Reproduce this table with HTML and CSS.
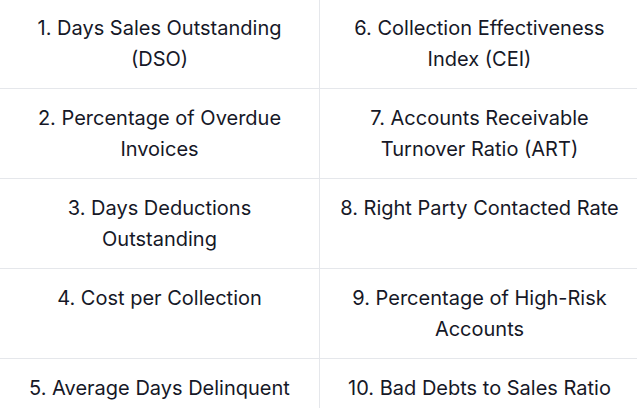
FILE: index.html
```html
<!DOCTYPE html>
<html>
<head>
<meta charset="utf-8">
<link rel="stylesheet" href="styles.css">
</head>
<body>
<table class="kpi-table">
  <tbody>
    <tr><td>1. Days Sales Outstanding (DSO)</td><td>6. Collection Effectiveness Index (CEI)</td></tr>
    <tr><td>2. Percentage of Overdue Invoices</td><td>7. Accounts Receivable Turnover Ratio (ART)</td></tr>
    <tr><td>3. Days Deductions Outstanding</td><td>8. Right Party Contacted Rate</td></tr>
    <tr><td>4. Cost per Collection</td><td>9. Percentage of High-Risk Accounts</td></tr>
    <tr><td>5. Average Days Delinquent</td><td>10. Bad Debts to Sales Ratio</td></tr>
  </tbody>
</table>
</body>
</html>
```
FILE: styles.css
```css
html, body {
  margin: 0;
  padding: 0;
  background: #ffffff;
  overflow: hidden;
}
.kpi-table {
  width: 641px;
  margin-top: -2px;
  margin-left: -1px;
  border-collapse: collapse;
  table-layout: fixed;
  font-family: Inter, "Noto Sans", sans-serif;
  font-size: 20px;
  line-height: 31px;
  color: #161827;
}
.kpi-table tr {
  height: 90px;
}
.kpi-table td {
  border: 1px solid #e5e7eb;
  padding: 14px 20px 10px;
  text-align: center;
  vertical-align: top;
  width: 50%;
}
```
